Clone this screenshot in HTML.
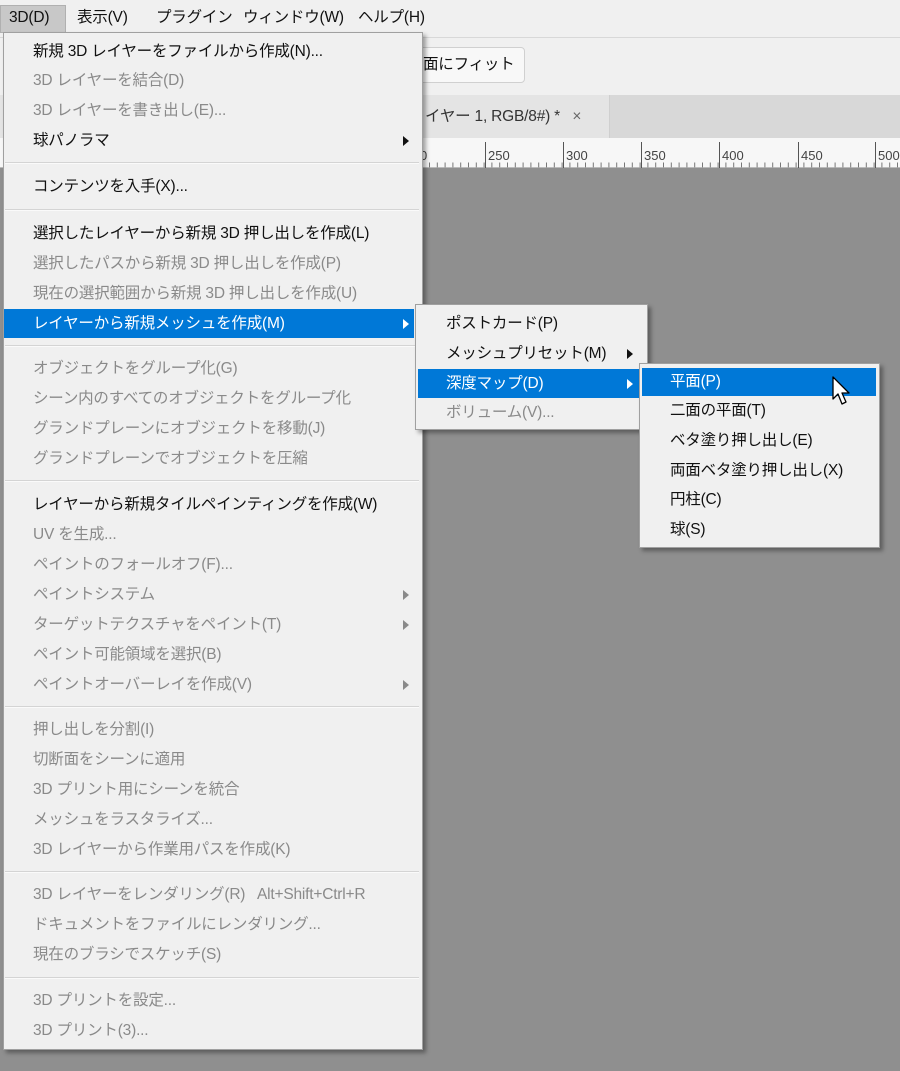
<!DOCTYPE html>
<html><head><meta charset="utf-8"><style>
*{margin:0;padding:0;box-sizing:border-box}
body{width:900px;height:1071px;overflow:hidden;background:#8f8f8f;font-family:"Liberation Sans","Noto Sans CJK JP",sans-serif;font-size:15.5px;color:#111;position:relative}
.abs{position:absolute}
.t{position:absolute;white-space:nowrap;line-height:20px;letter-spacing:-0.2px}
.d{color:#8a8a8a}
.hl{position:absolute;background:#0078d7}
.w{color:#fff}
.sep{position:absolute;height:2px;background:#d4d4d4;border-bottom:1px solid #fafafa}
.arr{position:absolute;width:0;height:0;border-top:5px solid transparent;border-bottom:5px solid transparent;border-left:6px solid #111}
.arr.g{border-left-color:#8a8a8a}
.arr.wh{border-left-color:#fff}
.menu{position:absolute;background:#f0f0f0;border:1px solid #a0a0a0;box-shadow:3px 3px 4px rgba(0,0,0,.35)}
</style></head><body>
<div class="abs" style="left:0;top:0;width:900px;height:95px;background:#f0f0f0"></div>
<div class="abs" style="left:0;top:37px;width:900px;height:1px;background:#d8d8d8"></div>
<div class="abs" style="left:0;top:5px;width:66px;height:28px;background:#c8c8c8;border:1px solid #b0b0b0"></div>
<div class="t" style="left:9px;top:8px">3D(D)</div>
<div class="t" style="left:77px;top:8px">表示(V)</div>
<div class="t" style="left:156px;top:8px">プラグイン</div>
<div class="t" style="left:243px;top:8px">ウィンドウ(W)</div>
<div class="t" style="left:358px;top:8px">ヘルプ(H)</div>
<div class="abs" style="left:395px;top:47px;width:130px;height:36px;background:#f8f8f8;border:1px solid #d0d0d0;border-radius:4px"></div>
<div class="t" style="left:423px;top:55px">面にフィット</div>
<div class="abs" style="left:0;top:95px;width:900px;height:43px;background:#d8d8d8"></div>
<div class="abs" style="left:0;top:95px;width:610px;height:43px;background:#e4e4e4;border-right:1px solid #cfcfcf"></div>
<div class="t" style="left:425px;top:107px;color:#333">イヤー 1, RGB/8#) *&nbsp;&nbsp; <span style="color:#666">×</span></div>
<div class="abs" style="left:0;top:138px;width:900px;height:30px;background:#f7f7f7;border-bottom:1px solid #bbb"></div>
<svg class="abs" style="left:420px;top:138px" width="480" height="30">
<g stroke="#555" stroke-width="1">
<line x1="65.5" y1="4" x2="65.5" y2="30"/><line x1="143.5" y1="4" x2="143.5" y2="30"/><line x1="221.5" y1="4" x2="221.5" y2="30"/><line x1="299.5" y1="4" x2="299.5" y2="30"/><line x1="378.5" y1="4" x2="378.5" y2="30"/><line x1="455.5" y1="4" x2="455.5" y2="30"/>
</g>
<g stroke="#777" stroke-width="1" stroke-dasharray="1 6.8"><line x1="9" y1="27" x2="480" y2="27" stroke-width="5"/></g>
<g font-size="13" fill="#444" font-family="Liberation Sans"><text x="0" y="22">0</text><text x="68" y="22">250</text><text x="146" y="22">300</text><text x="224" y="22">350</text><text x="302" y="22">400</text><text x="381" y="22">450</text><text x="458" y="22">500</text></g>
</svg>

<div class="menu" style="left:3px;top:32px;width:420px;height:1018px"></div>
<div class="t" style="left:33px;top:42px">新規 3D レイヤーをファイルから作成(N)...</div>
<div class="t d" style="left:33px;top:71px">3D レイヤーを結合(D)</div>
<div class="t d" style="left:33px;top:101px">3D レイヤーを書き出し(E)...</div>
<div class="t" style="left:33px;top:131px">球パノラマ</div><div class="arr" style="left:403px;top:136px"></div>
<div class="sep" style="left:5px;top:162px;width:414px"></div>
<div class="t" style="left:33px;top:177px">コンテンツを入手(X)...</div>
<div class="sep" style="left:5px;top:209px;width:414px"></div>
<div class="t" style="left:33px;top:224px">選択したレイヤーから新規 3D 押し出しを作成(L)</div>
<div class="t d" style="left:33px;top:254px">選択したパスから新規 3D 押し出しを作成(P)</div>
<div class="t d" style="left:33px;top:284px">現在の選択範囲から新規 3D 押し出しを作成(U)</div>
<div class="hl" style="left:4px;top:309px;width:410px;height:29px"></div>
<div class="t w" style="left:33px;top:314px">レイヤーから新規メッシュを作成(M)</div><div class="arr wh" style="left:403px;top:319px"></div>
<div class="sep" style="left:5px;top:345px;width:414px"></div>
<div class="t d" style="left:33px;top:359px">オブジェクトをグループ化(G)</div>
<div class="t d" style="left:33px;top:389px">シーン内のすべてのオブジェクトをグループ化</div>
<div class="t d" style="left:33px;top:419px">グランドプレーンにオブジェクトを移動(J)</div>
<div class="t d" style="left:33px;top:449px">グランドプレーンでオブジェクトを圧縮</div>
<div class="sep" style="left:5px;top:480px;width:414px"></div>
<div class="t" style="left:33px;top:495px">レイヤーから新規タイルペインティングを作成(W)</div>
<div class="t d" style="left:33px;top:525px">UV を生成...</div>
<div class="t d" style="left:33px;top:555px">ペイントのフォールオフ(F)...</div>
<div class="t d" style="left:33px;top:585px">ペイントシステム</div><div class="arr g" style="left:403px;top:590px"></div>
<div class="t d" style="left:33px;top:615px">ターゲットテクスチャをペイント(T)</div><div class="arr g" style="left:403px;top:620px"></div>
<div class="t d" style="left:33px;top:645px">ペイント可能領域を選択(B)</div>
<div class="t d" style="left:33px;top:675px">ペイントオーバーレイを作成(V)</div><div class="arr g" style="left:403px;top:680px"></div>
<div class="sep" style="left:5px;top:706px;width:414px"></div>
<div class="t d" style="left:33px;top:720px">押し出しを分割(I)</div>
<div class="t d" style="left:33px;top:750px">切断面をシーンに適用</div>
<div class="t d" style="left:33px;top:780px">3D プリント用にシーンを統合</div>
<div class="t d" style="left:33px;top:810px">メッシュをラスタライズ...</div>
<div class="t d" style="left:33px;top:840px">3D レイヤーから作業用パスを作成(K)</div>
<div class="sep" style="left:5px;top:871px;width:414px"></div>
<div class="t d" style="left:33px;top:885px">3D レイヤーをレンダリング(R)</div><div class="t d" style="left:257px;top:885px">Alt+Shift+Ctrl+R</div>
<div class="t d" style="left:33px;top:915px">ドキュメントをファイルにレンダリング...</div>
<div class="t d" style="left:33px;top:945px">現在のブラシでスケッチ(S)</div>
<div class="sep" style="left:5px;top:977px;width:414px"></div>
<div class="t d" style="left:33px;top:991px">3D プリントを設定...</div>
<div class="t d" style="left:33px;top:1021px">3D プリント(3)...</div>

<div class="menu" style="left:415px;top:304px;width:233px;height:126px"></div>
<div class="t" style="left:446px;top:314px">ポストカード(P)</div>
<div class="t" style="left:446px;top:344px">メッシュプリセット(M)</div><div class="arr" style="left:627px;top:349px"></div>
<div class="hl" style="left:418px;top:369px;width:222px;height:29px"></div>
<div class="t w" style="left:446px;top:374px">深度マップ(D)</div><div class="arr wh" style="left:627px;top:379px"></div>
<div class="t d" style="left:446px;top:403px">ボリューム(V)...</div>

<div class="menu" style="left:639px;top:363px;width:241px;height:185px"></div>
<div class="hl" style="left:642px;top:368px;width:234px;height:28px"></div>
<div class="t w" style="left:670px;top:372px">平面(P)</div>
<div class="t" style="left:670px;top:401px">二面の平面(T)</div>
<div class="t" style="left:670px;top:431px">ベタ塗り押し出し(E)</div>
<div class="t" style="left:670px;top:461px">両面ベタ塗り押し出し(X)</div>
<div class="t" style="left:670px;top:490px">円柱(C)</div>
<div class="t" style="left:670px;top:520px">球(S)</div>
<svg class="abs" style="left:832px;top:376px" width="22" height="32"><path d="M1 1 L1 23 L6 18 L10 28 L14 26 L10 17 L17 17 Z" fill="#fff" stroke="#000" stroke-width="1.3" stroke-linejoin="round"/></svg>
</body></html>
